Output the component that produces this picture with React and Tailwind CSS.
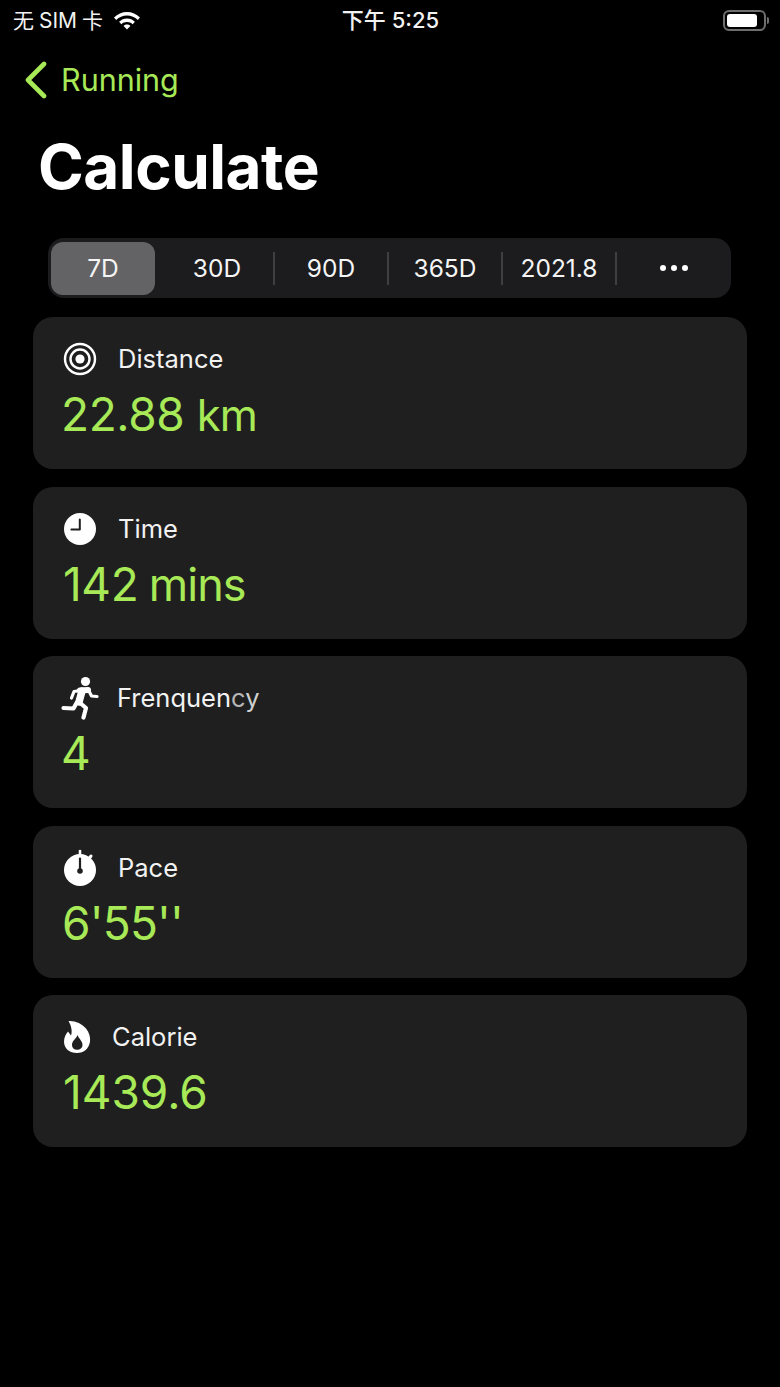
import React from 'react';

const GREEN = 'text-[#a7e956]';

const TargetIcon = () => (
  <svg width="34" height="34" viewBox="0 0 34 34" fill="none" stroke="white">
    <circle cx="17" cy="17" r="15" strokeWidth="2.4" />
    <circle cx="17" cy="17" r="9.5" strokeWidth="2.4" />
    <circle cx="17" cy="17" r="4.6" fill="white" stroke="none" />
  </svg>
);

const ClockIcon = () => (
  <svg width="34" height="34" viewBox="0 0 34 34" fill="none">
    <circle cx="17" cy="17" r="16" fill="white" />
    <path d="M16.8 7.5V17.4H8.4" stroke="#1f1f1f" strokeWidth="2" strokeLinecap="round" strokeLinejoin="round" />
  </svg>
);

const RunnerIcon = () => (
  <svg width="38" height="44" viewBox="0 0 38 44" fill="none" stroke="white" strokeLinecap="round" strokeLinejoin="round">
    <circle cx="24.5" cy="5.5" r="4.6" fill="white" stroke="none" />
    <path d="M19 14.5L27 14" strokeWidth="6" />
    <path d="M27.5 14L30.5 20L36 20.5" strokeWidth="3.2" />
    <path d="M19.5 14.5L13 15.5L10.5 22" strokeWidth="3.2" />
    <path d="M21 15L18 26" strokeWidth="7.5" />
    <path d="M18 26L25 32L22.5 41.5" strokeWidth="4.2" />
    <path d="M15.5 27L12.5 32.5L2.5 32" strokeWidth="4.2" />
  </svg>
);

const StopwatchIcon = () => (
  <svg width="34" height="38" viewBox="0 0 34 38" fill="none">
    <circle cx="17" cy="21" r="16" fill="white" />
    <path d="M17 2V6" stroke="white" strokeWidth="2.6" strokeLinecap="round" />
    <path d="M28 7L26.500 9" stroke="white" strokeWidth="3" strokeLinecap="round" />
    <path d="M17 9.500V21.500" stroke="#1f1f1f" strokeWidth="2.2" strokeLinecap="round" />
    <circle cx="17" cy="22" r="2.800" fill="#1f1f1f" />
  </svg>
);

const FlameIcon = () => (
  <svg width="28" height="34" viewBox="0 0 28 34">
    <path
      fillRule="evenodd"
      fill="white"
      d="M5.500 1C12 0.500 19 3.500 23 8.500C26.500 13 27.500 17.500 27 21.500C26 28.500 21 33 14 33C6.500 33 1 28.500 1 21.500C1 17 3 14 5 11.500L8 15.500C9.500 11.500 8.500 6 5.500 1ZM14.500 15C13.500 18.500 9 20.500 9 25C9 28 11 29.800 14 29.800C17 29.800 19.500 28 19.500 25C19.500 21 16 19 14.500 15Z"
    />
  </svg>
);

const cards = [
  {
    icon: <TargetIcon />,
    box: 'w-[34px] ml-0',
    label: 'Distance',
    labelClass: 'ml-[21px]',
    value: (
      <>
        22.88 <span className="text-[43.500px] tracking-[-1px]">km</span>
      </>
    ),
    valueClass: '-ml-[2px] tracking-[-0.4px]',
  },
  {
    icon: <ClockIcon />,
    box: 'w-[34px] ml-0',
    label: 'Time',
    labelClass: 'ml-[21px]',
    value: (
      <>
        142 <span className="text-[45px] tracking-[-1px]">mins</span>
      </>
    ),
    valueClass: 'tracking-[-0.4px] [word-spacing:-2px]',
  },
  {
    icon: <RunnerIcon />,
    box: 'w-[38px] -ml-[2px]',
    label: (
      <>
        Frenquen<span className="text-[#b5b5b5]">c</span><span className="text-[#d0d0d0]">y</span>
      </>
    ),
    labelClass: 'ml-[18px]',
    value: '4',
    valueClass: '-ml-[2px]',
  },
  { icon: <StopwatchIcon />, box: 'w-[34px] ml-0', label: 'Pace', labelClass: 'ml-[21px]', value: "6'55''", valueClass: '-ml-[1px] tracking-[-0.8px]' },
  { icon: <FlameIcon />, box: 'w-[28px] ml-0', label: 'Calorie', labelClass: 'ml-[21px]', value: '1439.6', valueClass: '' },
];

const tabs = ['7D', '30D', '90D', '365D', '2021.8'];

export default function App() {
  return (
    <div className="w-[780px] h-[1387px] bg-black text-white flex flex-col overflow-hidden font-['Inter','Noto_Sans_CJK_SC',sans-serif]">
      {/* Status bar */}
      <div className="h-[40px] grid grid-cols-3 items-center pl-[13px] pr-[11px]">
        <div className="flex items-center gap-[9px] text-[21px] leading-none text-[#f2f2f2]">
          <span className="[word-spacing:-1px]">无 SIM 卡</span>
          <svg width="30" height="22" viewBox="0 0 30 22" fill="white">
            <path d="M15 3C20 3 24.500 5 28 8.500L25.800 11C22.900 8 19.200 6.400 15 6.400C10.800 6.400 7.100 8 4.200 11L2 8.500C5.500 5 10 3 15 3Z" />
            <path d="M15 9.500C18 9.500 20.800 10.700 22.900 12.800L20.700 15.200C19.200 13.700 17.200 12.900 15 12.900C12.800 12.900 10.800 13.700 9.300 15.200L7.100 12.800C9.200 10.700 12 9.500 15 9.500Z" />
            <path d="M15 15.500C16.300 15.500 17.500 16 18.400 16.900L15 20.500L11.600 16.900C12.500 16 13.700 15.500 15 15.500Z" />
          </svg>
        </div>
        <div className="text-center text-[22px] leading-none text-[#f2f2f2] font-medium -ml-[1px]">下午 5:25</div>
        <div className="flex justify-end items-center">
          <div className="w-[43px] h-[21px] rounded-[6px] border-2 border-[#6e6e6e] p-[2px]">
            <div className="w-[30px] h-full rounded-[3px] bg-white" />
          </div>
          <div className="w-[2px] h-[7px] ml-[1px] rounded-r-full bg-[#6e6e6e]" />
        </div>
      </div>

      {/* Back */}
      <div className="h-[60px] mt-[10px] flex items-center pl-[24px] gap-[14px]">
        <svg width="24" height="38" viewBox="0 0 24 38" fill="none" stroke="#a7e956" strokeWidth="4.600" strokeLinecap="round" strokeLinejoin="round">
          <path d="M20 3L4 19L20 35" />
        </svg>
        <span className={`text-[30.500px] leading-none -ml-[1px] ${GREEN}`}>Running</span>
      </div>

      {/* Title */}
      <h1 className="mt-[33px] ml-[38px] text-[62px] leading-[48px] font-bold tracking-[-0.5px] text-white">Calculate</h1>

      {/* Segments */}
      <div className="mt-[47px] ml-[48px] w-[683px] h-[60px] rounded-[16px] bg-[#1c1c1e] flex items-center pl-[3px] text-[24.500px] text-[#f5f5f5]">
        {tabs.map((t, i) => (
          <React.Fragment key={t}>
            <div className={`h-[53px] pt-[1px] flex items-center justify-center ${i === 0 ? 'w-[104px] rounded-[12px] bg-[#636366]' : 'w-[112px]'}`}>{t}</div>
            {i > 0 && <div className="w-[2px] h-[33px] bg-[#3f3f42]" />}
            {i === 0 && <div className="w-[6px]" />}
          </React.Fragment>
        ))}
        <div className="flex-1 flex items-center justify-center gap-[5px]">
          <div className="w-[6px] h-[6px] rounded-full bg-white" />
          <div className="w-[6px] h-[6px] rounded-full bg-white" />
          <div className="w-[6px] h-[6px] rounded-full bg-white" />
        </div>
      </div>

      {/* Cards */}
      <div className="mt-[19px] mx-[33px] flex flex-col gap-[17.500px]">
        {cards.map((c, i) => (
          <div key={i} className="h-[152px] rounded-[20px] bg-[#1f1f1f] pl-[30px] flex flex-col">
            <div className="h-[44px] mt-[20px] flex items-center">
              <div className={`flex justify-center shrink-0 ${c.box}`}>{c.icon}</div>
              <span className={`text-[25.500px] leading-none text-[#f2f2f2] ${c.labelClass}`}>{c.label}</span>
            </div>
            <div className={`text-[46px] leading-[56px] mt-[5px] ${GREEN} ${c.valueClass}`}>{c.value}</div>
          </div>
        ))}
      </div>
    </div>
  );
}
